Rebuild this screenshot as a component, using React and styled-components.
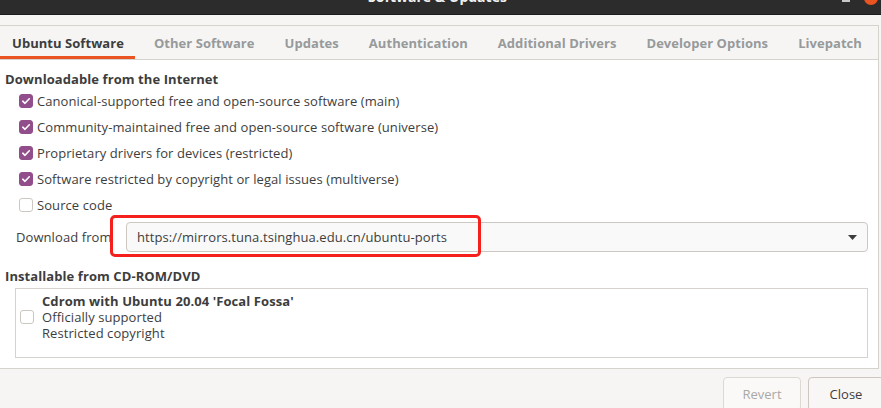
import React from 'react';
import styled, { createGlobalStyle } from 'styled-components';

const GlobalStyle = createGlobalStyle`
  html, body {
    margin: 0;
    padding: 0;
    background: #f6f5f4;
  }
  body {
    font-family: "Open Sans", "Noto Sans", sans-serif;
    font-size: 13px;
    color: #3d3d3d;
  }
`;

const Window = styled.div`
  width: 881px;
  height: 408px;
  background: #f6f5f4;
  overflow: hidden;
  display: flex;
  flex-direction: column;
`;

const TitleBar = styled.div`
  height: 14px;
  flex: none;
  background: #2c2c2c;
  display: flex;
  align-items: flex-start;
  justify-content: center;
  overflow: hidden;
  position: relative;
  border-bottom: 1px solid #1d1d1d;
`;

const Title = styled.span`
  margin-top: -12px;
  margin-left: -6px;
  font-weight: 700;
  font-size: 14px;
  line-height: 18px;
  color: #f0f0f0;
`;

const WindowControls = styled.div`
  position: absolute;
  right: 3px;
  top: 0;
  display: flex;
  gap: 14px;
  align-items: flex-start;
`;

const MinimizeMark = styled.span`
  display: block;
  width: 8px;
  height: 2px;
  background: #c8c8c8;
`;

const CloseDot = styled.span`
  display: block;
  width: 14px;
  height: 14px;
  margin-top: -9px;
  border-radius: 50%;
  background: #e95420;
`;

const HeaderGap = styled.div`
  height: 10px;
  flex: none;
`;

const Notebook = styled.div`
  width: 878px;
  border-top: 1px solid #d6d2cd;
  border-right: 1px solid #d6d2cd;
  border-bottom: 1px solid #d6d2cd;
  display: flex;
  flex-direction: column;
`;

const TabBar = styled.div`
  height: 33px;
  display: flex;
  align-items: stretch;
  border-bottom: 1px solid #d6d2cd;
  background: #f6f5f4;
`;

const Tab = styled.div`
  padding-left: ${p => (p.first ? '12px' : '15px')};
  padding-right: ${p => (p.first ? '11px' : '15px')};
  margin-right: ${p => (p.first ? '4px' : '0')};
  display: flex;
  align-items: center;
  font-weight: 700;
  font-size: 13px;
  letter-spacing: 0.05px;
  color: ${p => (p.active ? '#3d3d3d' : '#979a9b')};
  box-shadow: ${p => (p.active ? 'inset 0 -3px 0 #e95420' : 'none')};
  white-space: nowrap;
`;

const Page = styled.div`
  background: #ffffff;
  padding: 10px 0 10px 0;
  display: flex;
  flex-direction: column;
  letter-spacing: 0.08px;
`;

const SectionHeading = styled.div`
  height: 18px;
  line-height: 18px;
  padding-left: 5px;
  font-weight: 700;
  font-size: 13px;
  color: #3d3d3d;
  margin-top: ${p => p.gap || 0}px;
`;

const CheckRow = styled.label`
  height: 26px;
  display: flex;
  align-items: center;
  gap: 4px;
  padding-left: 19px;
`;

const Box = styled.span`
  width: 14px;
  height: 14px;
  flex: none;
  box-sizing: border-box;
  border-radius: 3px;
  border: 1px solid ${p => (p.checked ? '#924d8b' : '#cdc7c2')};
  background: ${p => (p.checked ? '#924d8b' : '#ffffff')};
  display: flex;
  align-items: center;
  justify-content: center;
`;

const Check = ({ checked }) => (
  <Box checked={checked}>
    {checked && (
      <svg width="10" height="10" viewBox="0 0 10 10">
        <path d="M1.8 5.2 L4 7.3 L8.3 2.8" fill="none" stroke="#fff" strokeWidth="1.6" strokeLinecap="round" strokeLinejoin="round" />
      </svg>
    )}
  </Box>
);

const DownloadRow = styled.div`
  position: relative;
  margin-top: 4px;
  display: flex;
  align-items: center;
  padding-left: 16px;
  padding-right: 10px;
`;

const FieldLabel = styled.span`
  width: 110px;
  flex: none;
`;

const Combo = styled.div`
  flex: 1;
  height: 30px;
  box-sizing: border-box;
  border: 1px solid #cdc7c2;
  border-radius: 4px;
  background: #f9f9f9;
  display: flex;
  align-items: center;
  justify-content: space-between;
  padding: 0 10px 0 10px;
`;

const Highlight = styled.div`
  position: absolute;
  left: 110px;
  top: -7px;
  width: 371px;
  height: 42px;
  box-sizing: border-box;
  border: 3px solid #f5201c;
  border-radius: 5px;
  pointer-events: none;
`;

const ListBox = styled.div`
  margin: 3px 10px 0 15px;
  height: 70px;
  box-sizing: border-box;
  border: 1px solid #d6d2cd;
  padding: 4px 0 0 4px;
  display: flex;
  gap: 8px;
`;

const ListCheck = styled.div`
  padding-top: 17px;
`;

const Lines = styled.div`
  display: flex;
  flex-direction: column;
  line-height: 16px;
`;

const Strong = styled.span`
  font-weight: 700;
`;

const ButtonRow = styled.div`
  display: flex;
  justify-content: flex-end;
  gap: 7px;
  padding-top: 8px;
  margin-right: -3px;
`;

const Button = styled.button`
  width: ${p => p.w}px;
  height: 34px;
  box-sizing: border-box;
  border: 1px solid ${p => (p.disabled ? '#dcd8d4' : '#cdc7c2')};
  border-radius: 4px;
  background: ${p => (p.disabled ? '#faf9f8' : '#f8f7f6')};
  color: ${p => (p.disabled ? '#a9a8a7' : '#3d3d3d')};
  font-family: "Open Sans", "Noto Sans", sans-serif;
  font-size: 13px;
  padding: 0;
`;

const sources = [
  ['Canonical-supported free and open-source software (main)', true],
  ['Community-maintained free and open-source software (universe)', true],
  ['Proprietary drivers for devices (restricted)', true],
  ['Software restricted by copyright or legal issues (multiverse)', true],
  ['Source code', false],
];

const tabs = ['Ubuntu Software', 'Other Software', 'Updates', 'Authentication', 'Additional Drivers', 'Developer Options', 'Livepatch'];

export default function App() {
  return (
    <Window>
      <GlobalStyle />
      <TitleBar>
        <Title>Software &amp; Updates</Title>
        <WindowControls>
          <MinimizeMark />
          <CloseDot />
        </WindowControls>
      </TitleBar>
      <HeaderGap />
      <Notebook>
        <TabBar>
          {tabs.map((t, i) => (
            <Tab key={t} first={i === 0} active={i === 0}>{t}</Tab>
          ))}
        </TabBar>
        <Page>
          <SectionHeading>Downloadable from the Internet</SectionHeading>
          {sources.map(([text, on]) => (
            <CheckRow key={text}>
              <Check checked={on} />
              <span>{text}</span>
            </CheckRow>
          ))}
          <DownloadRow>
            <FieldLabel>Download from</FieldLabel>
            <Combo>
              <span>https://mirrors.tuna.tsinghua.edu.cn/ubuntu-ports</span>
              <svg width="9" height="5" viewBox="0 0 9 5">
                <path d="M0 0 H9 L4.5 5 Z" fill="#3d3d3d" />
              </svg>
            </Combo>
            <Highlight />
          </DownloadRow>
          <SectionHeading gap={15}>Installable from CD-ROM/DVD</SectionHeading>
          <ListBox>
            <ListCheck>
              <Check checked={false} />
            </ListCheck>
            <Lines>
              <Strong>Cdrom with Ubuntu 20.04 'Focal Fossa'</Strong>
              <span>Officially supported</span>
              <span>Restricted copyright</span>
            </Lines>
          </ListBox>
        </Page>
      </Notebook>
      <ButtonRow>
        <Button w={78} disabled>Revert</Button>
        <Button w={76}>Close</Button>
      </ButtonRow>
    </Window>
  );
}
